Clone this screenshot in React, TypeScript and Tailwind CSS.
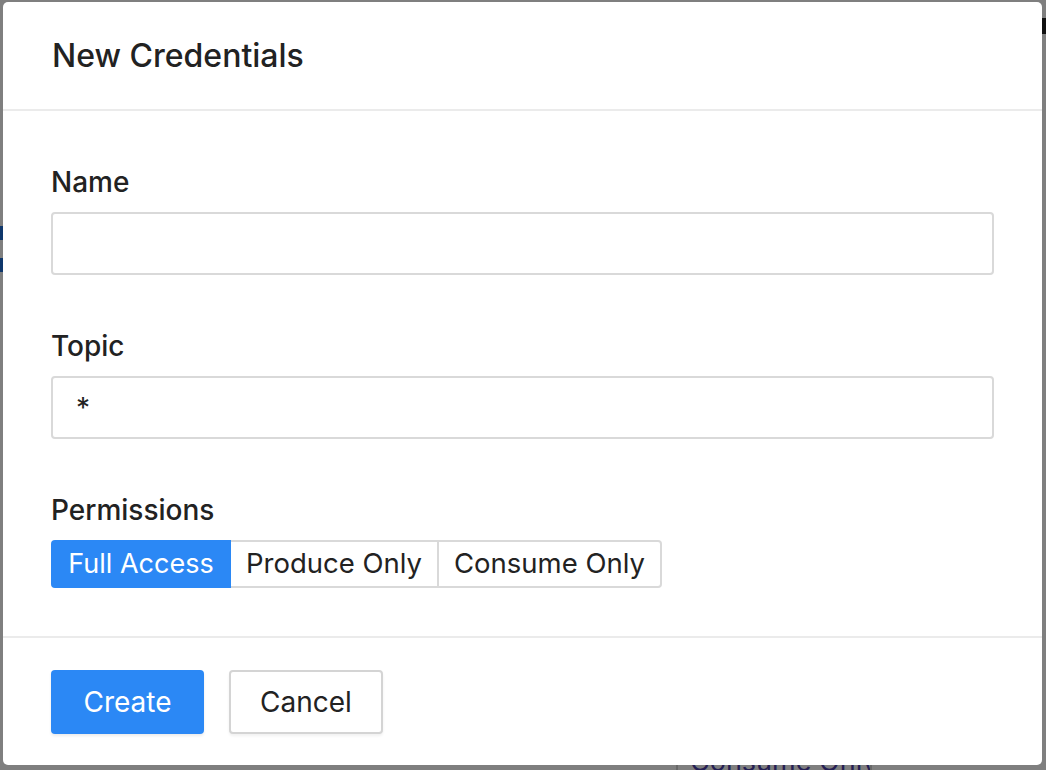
import React from "react";

const font = { fontFamily: "Inter, 'Noto Sans', sans-serif" };

export default function App() {
  return (
    <div className="relative h-[770px] w-full overflow-hidden bg-white" style={font}>
      {/* underlying page (dimmed) */}
      <div className="absolute left-0 top-[226px] h-[14px] w-[4px] bg-[#1f6fd6]" />
      <div className="absolute left-0 top-[258px] h-[14px] w-[4px] bg-[#1f6fd6]" />
      <div className="absolute right-0 top-[18px] h-[16px] w-[5px] bg-[#222]" />
      <div className="absolute left-[676px] top-[738px] flex h-[48px] w-[196px] items-center overflow-hidden whitespace-nowrap border-2 border-[#d0d0d0] pl-[12px] text-[27px] text-[#4b3fa8]">
        Consume Only
      </div>
      {/* overlay */}
      <div className="absolute inset-0 bg-black/50" />
      {/* modal */}
      <div className="absolute left-[3px] top-[2px] flex h-[763px] w-[1039px] flex-col rounded-[5px] bg-white text-[#222]">
        <div className="flex h-[109px] shrink-0 items-center border-b-2 border-[#ebebeb] px-[49px]">
          <h2 className="text-[32px] font-medium leading-none text-[#222]">New Credentials</h2>
        </div>
        <div className="flex flex-1 flex-col px-[48px] pt-[53px]">
          <label className="mb-[12px] text-[28px] font-medium leading-[36px]">Name</label>
          <input
            className="h-[63px] w-full rounded-[4px] border-2 border-[#d9d9d9] px-[23px] text-[28px] outline-none"
            defaultValue=""
          />
          <label className="mb-[12px] mt-[53px] text-[28px] font-medium leading-[36px]">Topic</label>
          <input
            className="h-[63px] w-full rounded-[4px] border-2 border-[#d9d9d9] px-[23px] text-[28px] outline-none"
            defaultValue="*"
          />
          <label className="mb-[12px] mt-[53px] text-[28px] font-medium leading-[36px]">Permissions</label>
          <div className="flex h-[48px] self-start">
            <button className="h-full w-[180px] rounded-l-[4px] bg-[#2b88f5] text-[27px] text-white">
              Full Access
            </button>
            <button className="h-full w-[208px] border-y-2 border-r-2 border-[#d9d9d9] bg-white text-[27.5px] text-[#222]">
              Produce Only
            </button>
            <button className="h-full w-[223px] rounded-r-[4px] border-y-2 border-r-2 border-[#d9d9d9] bg-white text-[27.5px] text-[#222]">
              Consume Only
            </button>
          </div>
        </div>
        <div className="flex h-[129px] shrink-0 items-center gap-[25px] border-t-2 border-[#ebebeb] px-[48px]">
          <button className="h-[64px] w-[153px] rounded-[4px] bg-[#2b88f5] text-[28px] text-white shadow-[0_2px_3px_rgba(0,0,0,0.08)]">
            Create
          </button>
          <button className="h-[64px] w-[154px] rounded-[4px] border-2 border-[#d4d4d4] bg-white text-[28px] text-[#222] shadow-[0_2px_3px_rgba(0,0,0,0.06)]">
            Cancel
          </button>
        </div>
      </div>
    </div>
  );
}
